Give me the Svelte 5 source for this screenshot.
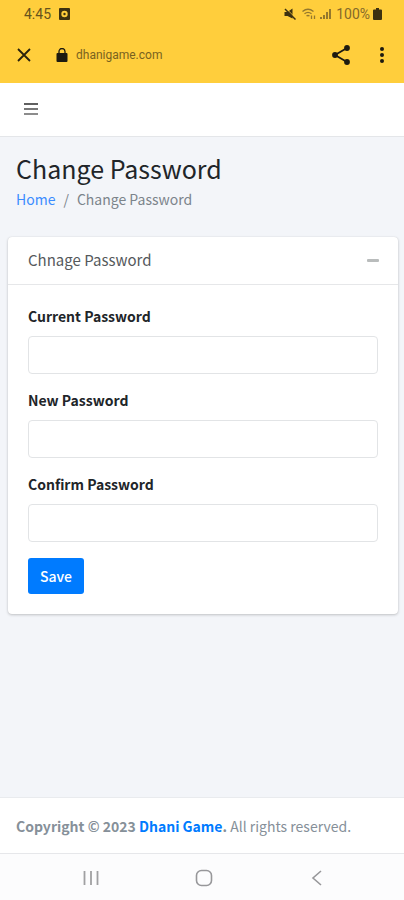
<script lang="ts">
    const fields = [
        { id: 'current', label: 'Current Password' },
        { id: 'new', label: 'New Password' },
        { id: 'confirm', label: 'Confirm Password' },
    ];

    let collapsed = $state(false);
</script>

<div class="screen">
    <header class="browser">
        <div class="status">
            <span>4:45</span>
            <svg class="recorder" width="11" height="12" viewBox="0 0 11 12">
                <rect width="11" height="12" rx="1" fill="#3d3110" />
                <circle cx="5.5" cy="6" r="3.2" fill="#ffce3c" />
                <circle cx="5.5" cy="6" r="1.2" fill="#3d3110" />
            </svg>
            <div class="signals">
                <svg width="12" height="12" viewBox="0 0 12 12">
                    <path d="M0.5 4h3L8.500 0.500v10L3.500 8h-3z" fill="#3d3110" />
                    <path d="M2 0.500l9.500 9.500" stroke="#ffce3c" stroke-width="1" />
                    <path d="M1 1l10.500 10.500" stroke="#3d3110" stroke-width="1.500" />
                </svg>
                <svg class="wifi" width="14" height="12" viewBox="0 0 14 12" fill="none" stroke="#94782d" stroke-width="1.3">
                    <path d="M0.5 3.5Q6 -1 11.5 3.5M2.5 5.8Q6 3 9.5 5.8M4.5 8Q6 7 7.5 8" />
                    <path d="M9.5 7.5v3.5M12.5 11V7.5" />
                </svg>
                <svg width="12" height="12" viewBox="0 0 12 12" fill="#94782d">
                    <path d="M0 9h2v2H0zM3 7h2v4H3zM6 4h2v7H6zM9 1h2v10H9z" />
                </svg>
                <span class="charge">100%</span>
                <svg width="9" height="12" viewBox="0 0 9 12">
                    <path d="M3 0h3v1.5h2q1 0 1 1V11q0 1-1 1H1q-1 0-1-1V2.5q0-1 1-1h2z" fill="#3d3110" />
                </svg>
            </div>
        </div>
        <div class="address">
            <button class="icon" aria-label="Close tab">
                <svg width="14" height="14" viewBox="0 0 14 14">
                    <path d="M1 1l12 12M13 1L1 13" stroke="#29220c" stroke-width="1.8" />
                </svg>
            </button>
            <svg class="lock" width="12" height="14" viewBox="0 0 12 14">
                <path d="M3 6V3.5a3 3 0 0 1 6 0V6" fill="none" stroke="#1d1a10" stroke-width="1.3" />
                <rect x="0.5" y="5" width="11" height="9" rx="1" fill="#1d1a10" />
            </svg>
            <span class="domain">dhanigame.com</span>
            <button class="icon" aria-label="Share">
                <svg width="20" height="20" viewBox="0 0 20 20" fill="#1d1a10">
                    <path d="M16 3L4 10l12 7" fill="none" stroke="#1d1a10" stroke-width="1.8" />
                    <circle cx="16" cy="3" r="2.9" />
                    <circle cx="4" cy="10" r="2.9" />
                    <circle cx="16" cy="17" r="2.9" />
                </svg>
            </button>
            <button class="icon menu" aria-label="More options">
                <svg width="6" height="18" viewBox="0 0 6 18" fill="#1d1a10">
                    <circle cx="3" cy="3" r="2" />
                    <circle cx="3" cy="9" r="2" />
                    <circle cx="3" cy="15" r="2" />
                </svg>
            </button>
        </div>
    </header>

    <nav class="navbar">
        <button class="icon" aria-label="Toggle navigation">
            <svg width="14" height="14" viewBox="0 0 14 14">
                <path d="M0 2h14" stroke="#606060" stroke-width="2" />
                <path d="M0 7h14" stroke="#777" stroke-width="2" />
                <path d="M0 12h14" stroke="#8c8c8c" stroke-width="2" />
            </svg>
        </button>
    </nav>

    <main>
        <div class="heading">
            <h1>Change Password</h1>
            <div class="breadcrumb">
                <a href="#home">Home</a>
                <span class="slash">/</span>
                <span>Change Password</span>
            </div>
        </div>

        <section class="card">
            <div class="card-header">
                <h2>Chnage Password</h2>
                <button class="icon" aria-label="Collapse" onclick={() => (collapsed = !collapsed)}>
                    <svg width="12" height="12" viewBox="0 0 12 12">
                        <rect y="5" width="12" height="3" rx="1" fill="#b9bcbc" />
                    </svg>
                </button>
            </div>
            {#if !collapsed}
                <form onsubmit={(e) => e.preventDefault()}>
                    {#each fields as field}
                        <div class="field">
                            <label for={field.id}>{field.label}</label>
                            <input id={field.id} type="password" />
                        </div>
                    {/each}
                    <button class="save" type="submit">Save</button>
                </form>
            {/if}
        </section>
    </main>

    <footer>
        <strong>Copyright © 2023 <a href="#home">Dhani Game</a>.</strong> All rights reserved.
    </footer>

    <div class="system">
        <button class="icon" aria-label="Recent apps">
            <svg width="16" height="16" viewBox="0 0 16 16">
                <path d="M1.5 1v14M8 1v14M14.5 1v14" stroke="#a0a0a2" stroke-width="1.8" />
            </svg>
        </button>
        <button class="icon" aria-label="Home screen">
            <svg width="18" height="18" viewBox="0 0 18 18">
                <rect x="1.5" y="1.5" width="15" height="15" rx="5" fill="none" stroke="#97979a" stroke-width="1.6" />
            </svg>
        </button>
        <button class="icon" aria-label="Back">
            <svg width="16" height="16" viewBox="0 0 16 16">
                <path d="M12 1L4 8l8 7" fill="none" stroke="#97979a" stroke-width="1.6" />
            </svg>
        </button>
    </div>
</div>

<style>
    :global(body) {
        margin: 0;
    }

    .screen {
        display: flex;
        flex-direction: column;
        min-height: 100vh;
        background: #f3f5f9;
        color: #212529;
        font-family: 'Noto Sans CJK SC', 'Noto Sans', sans-serif;
        font-size: 14px;
        line-height: 20px;
    }

    .icon {
        display: flex;
        padding: 0;
        border: 0;
        background: none;
        cursor: pointer;
    }

    a {
        color: #007bff;
        text-decoration: none;
    }

    /* phone status bar and in-app browser bar */
    .browser {
        background: #ffce3c;
        font-family: Roboto, sans-serif;
    }

    .status {
        display: flex;
        align-items: center;
        height: 28px;
        padding: 0 22px 0 24px;
        color: #66531d;
    }

    .recorder {
        margin-left: 8px;
    }

    .signals {
        display: flex;
        align-items: center;
        margin-left: auto;
    }

    .wifi {
        margin: 0 4px 0 6px;
    }

    .charge {
        margin: 0 3px 0 4px;
        color: #84692a;
    }

    .address {
        display: flex;
        align-items: center;
        height: 55px;
        padding: 0 19px 2px 17px;
        box-sizing: border-box;
    }

    .lock {
        margin: 0 8px 0 25px;
    }

    .domain {
        flex: 1;
        color: #79621f;
        font-size: 12px;
    }

    .menu {
        margin-left: 28px;
    }

    .navbar {
        display: flex;
        align-items: center;
        height: 54px;
        padding: 0 24px 2px;
        border-bottom: 1px solid #e4e6e9;
        box-sizing: border-box;
        background: #fff;
    }

    main {
        flex: 1;
        padding: 16px 6px 24px 8px;
    }

    .heading {
        padding: 0 8px;
    }

    h1 {
        margin: 0 0 6px;
        font-size: 25px;
        font-weight: 400;
        line-height: 30px;
    }

    .breadcrumb {
        display: flex;
        gap: 8px;
        padding-bottom: 28px;
        color: #7c848b;
    }

    .breadcrumb a {
        color: #3b8cff;
    }

    .card {
        border-radius: 4px;
        background: #fff;
        box-shadow: 0 0 1px rgba(0, 0, 0, 0.13), 0 1px 3px rgba(0, 0, 0, 0.2);
    }

    .card-header {
        display: flex;
        align-items: center;
        justify-content: space-between;
        height: 48px;
        padding: 0 19px 2px 20px;
        border-bottom: 1px solid #e6e7e9;
        box-sizing: border-box;
    }

    h2 {
        margin: 0;
        color: #55595c;
        font-size: 15px;
        font-weight: 400;
    }

    form {
        padding: 21px 20px 20px;
    }

    .field {
        margin-bottom: 16px;
    }

    label {
        display: block;
        margin-bottom: 10px;
        font-weight: 700;
    }

    input {
        display: block;
        width: 100%;
        height: 38px;
        padding: 6px 12px;
        border: 1px solid #e2e4e6;
        border-radius: 4px;
        box-sizing: border-box;
        background: #fff;
        font: inherit;
    }

    .save {
        display: block;
        height: 36px;
        padding: 0 12px;
        border: 0;
        border-radius: 3px;
        background: #007bff;
        color: #fff;
        font: inherit;
        font-weight: 500;
        cursor: pointer;
    }

    footer {
        padding: 18px 16px 17px;
        border-top: 1px solid #e9ebee;
        background: #fff;
        color: #869099;
    }

    .system {
        display: flex;
        align-items: center;
        justify-content: space-between;
        height: 47px;
        padding: 2px 79px 0 83px;
        border-top: 1px solid #e6e7ea;
        box-sizing: border-box;
        background: #fcfcfd;
    }
</style>
